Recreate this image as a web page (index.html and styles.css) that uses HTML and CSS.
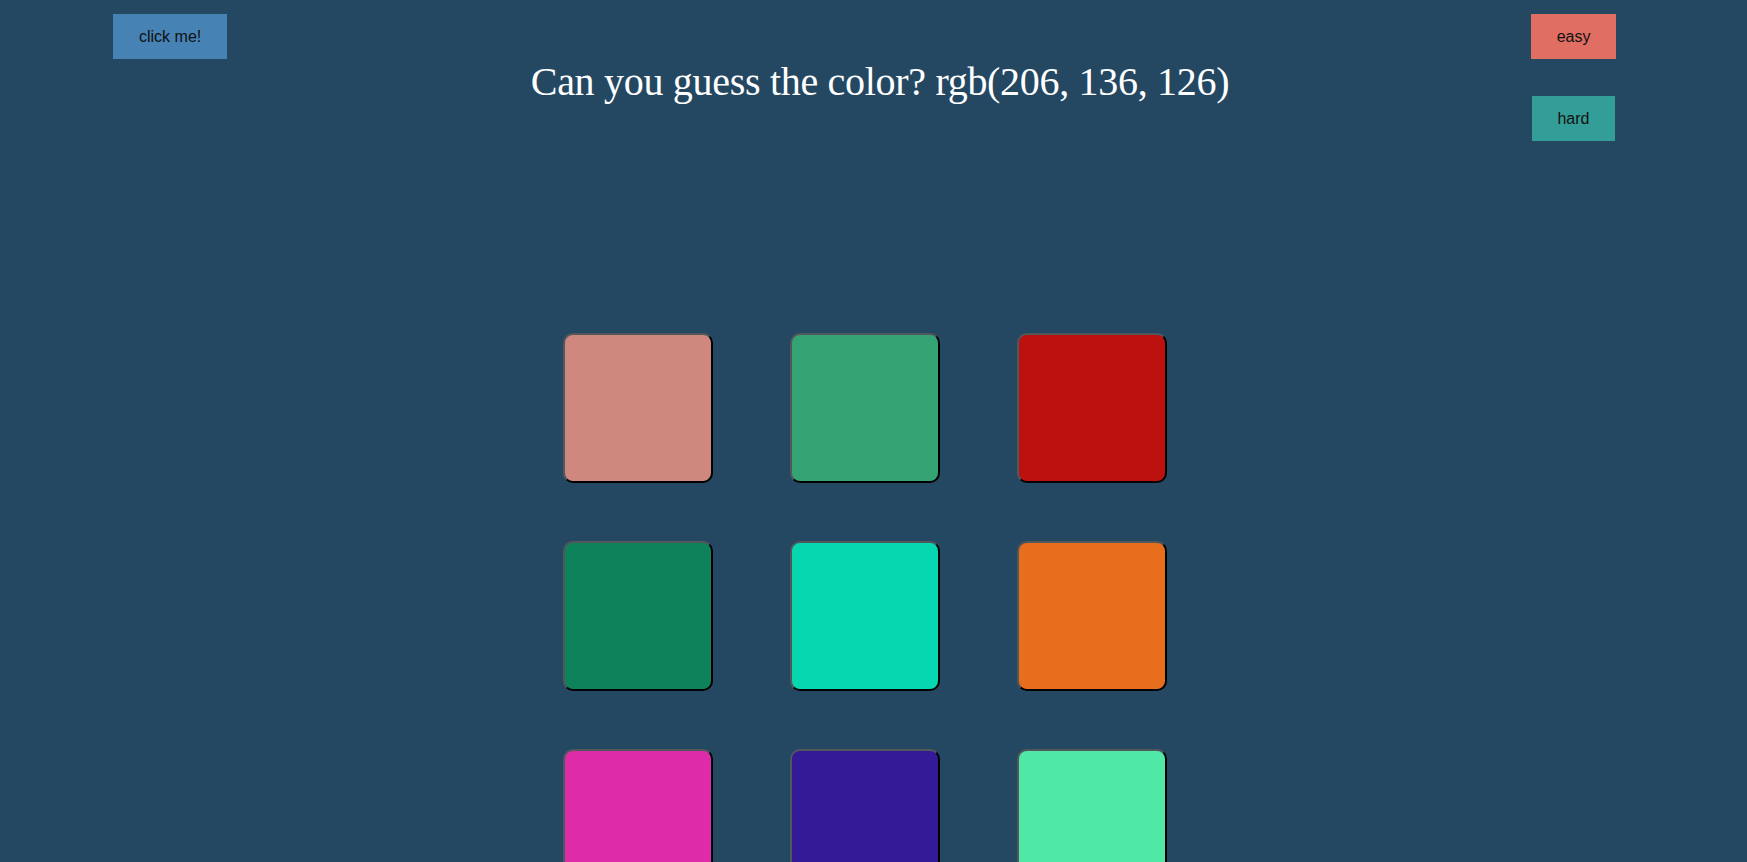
FILE: index.html
```html
<!DOCTYPE html>
<html>
<head>
<meta charset="utf-8">
<title>Color Game</title>
<link rel="stylesheet" href="styles.css">
</head>
<body>
<header class="top">
  <div class="left">
    <button class="btn btn-click">click me!</button>
  </div>
  <h1 class="title">Can you guess the color? rgb(206, 136, 126)</h1>
  <div class="right">
    <button class="btn btn-easy">easy</button>
    <button class="btn btn-hard">hard</button>
  </div>
</header>
<main class="board">
  <div class="grid">
    <div class="tile" style="background: rgb(206, 136, 126);"></div>
    <div class="tile" style="background: rgb(53, 163, 115);"></div>
    <div class="tile" style="background: rgb(188, 17, 14);"></div>
    <div class="tile" style="background: rgb(14, 130, 90);"></div>
    <div class="tile" style="background: rgb(7, 215, 176);"></div>
    <div class="tile" style="background: rgb(230, 110, 28);"></div>
    <div class="tile" style="background: rgb(222, 44, 168);"></div>
    <div class="tile" style="background: rgb(51, 27, 151);"></div>
    <div class="tile" style="background: rgb(79, 232, 166);"></div>
  </div>
</main>
</body>
</html>
```

FILE: styles.css
```css
html, body {
  margin: 0;
  padding: 0;
}

body {
  background: #244862;
  min-height: 862px;
  overflow: hidden;
  font-family: "Liberation Sans", Arial, sans-serif;
}

.top {
  display: grid;
  grid-template-columns: 1fr auto 1fr;
  align-items: start;
  padding: 14px 0 0 0;
}

.left {
  display: flex;
  justify-content: flex-start;
  padding-left: 113px;
}

.right {
  display: flex;
  flex-direction: column;
  align-items: flex-end;
  padding-right: 131px;
}

.btn {
  height: 45px;
  border: none;
  padding: 0 26px;
  font-family: "Liberation Sans", Arial, sans-serif;
  font-size: 16px;
  color: #111;
  cursor: pointer;
}

.btn-click {
  background: #4682b4;
}

.btn-easy {
  background: #e06e62;
  padding: 0 25.5px;
}

.btn-hard {
  background: #339e98;
  padding: 0 25.5px;
  margin-top: 37px;
  margin-right: 1px;
}

.title {
  margin: 44px 0 0 0;
  padding-left: 13px;
  font-family: "Liberation Serif", "Times New Roman", serif;
  font-weight: normal;
  font-size: 40px;
  letter-spacing: -0.3px;
  line-height: 48px;
  color: #ffffff;
  text-align: center;
  white-space: nowrap;
}

.board {
  display: flex;
  justify-content: center;
  padding-right: 17px;
  margin-top: 192px;
}

.grid {
  display: grid;
  grid-template-columns: repeat(3, 150px);
  grid-auto-rows: 150px;
  column-gap: 77px;
  row-gap: 58px;
}

.tile {
  box-sizing: border-box;
  border: 2px solid;
  border-color: #52575c #000 #000 #52575c;
  border-radius: 10px;
}
```
